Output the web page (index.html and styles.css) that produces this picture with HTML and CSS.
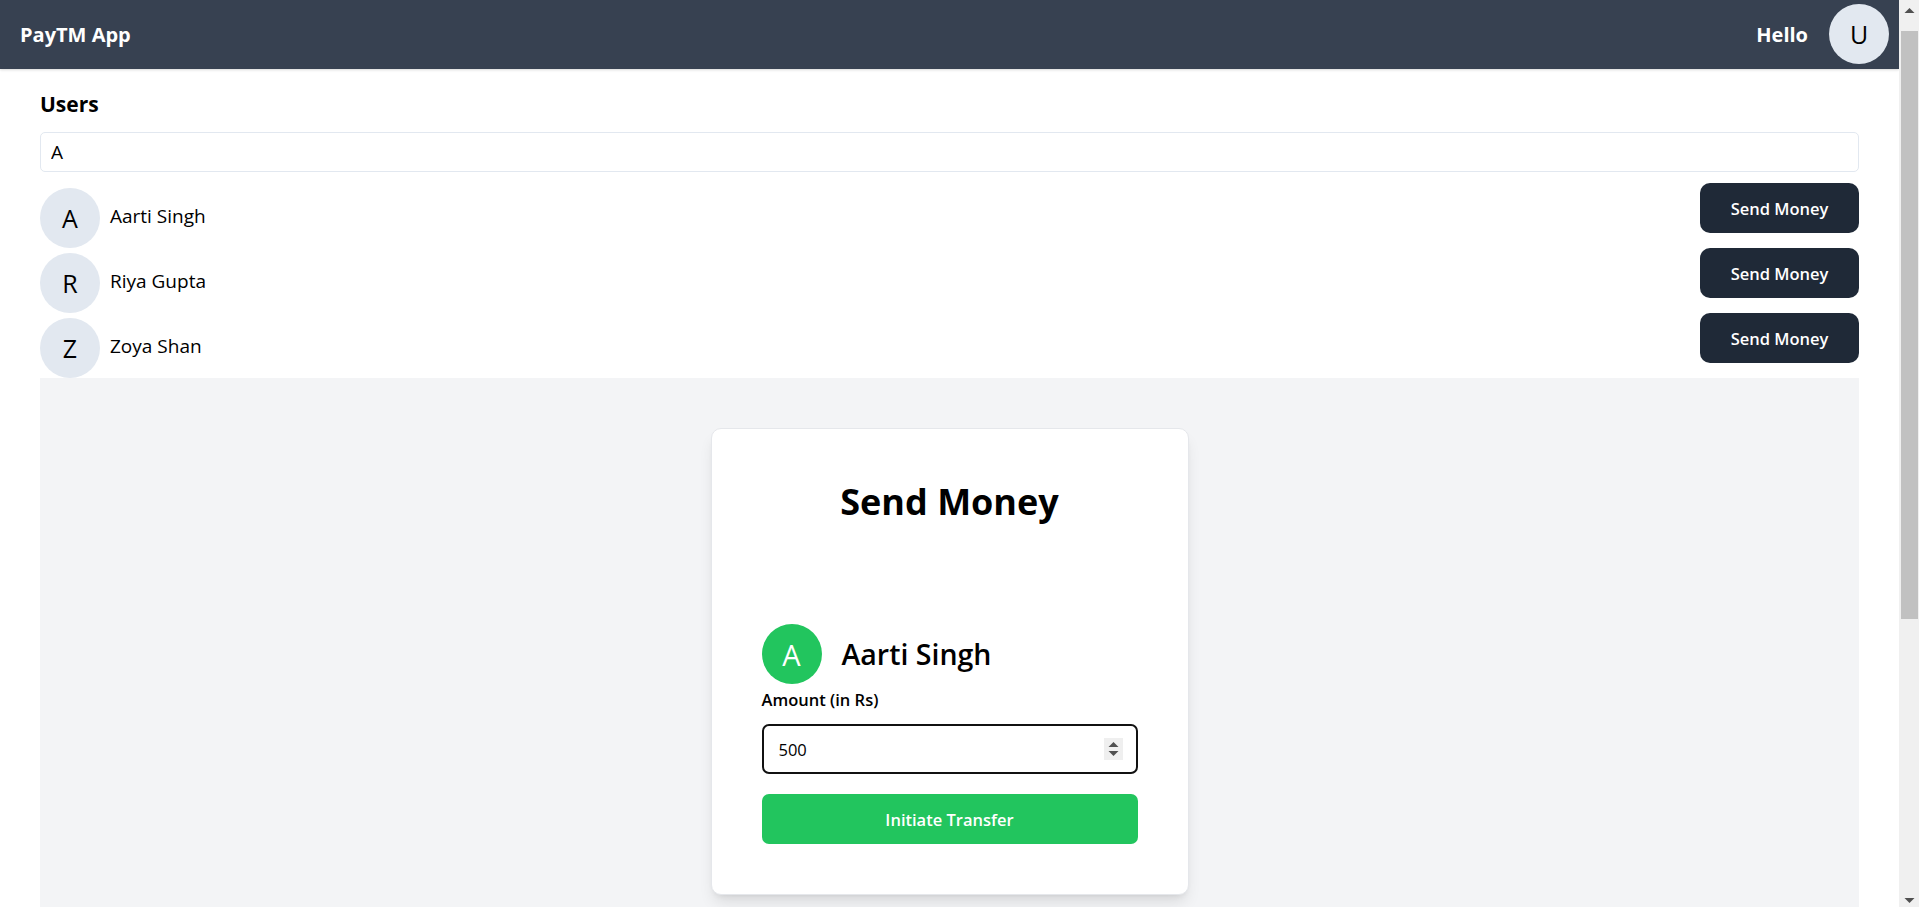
FILE: index.html
```html
<!DOCTYPE html>
<html lang="en">
<head>
<meta charset="utf-8">
<title>PayTM App</title>
<link rel="stylesheet" href="styles.css">
</head>
<body>
<header class="appbar">
  <div class="brand">PayTM App</div>
  <div class="appbar-right">
    <div class="hello">Hello</div>
    <div class="avatar avatar-nav">U</div>
  </div>
</header>
<main class="dashboard">
  <section class="users">
    <div class="users-title">Users</div>
    <div class="search-wrap">
      <input class="search" type="text" value="A" placeholder="Search users...">
    </div>
    <div class="user-list">
      <div class="user-row">
        <div class="user-info">
          <div class="avatar">A</div>
          <div class="user-name">Aarti Singh</div>
        </div>
        <button class="btn-send">Send Money</button>
      </div>
      <div class="user-row">
        <div class="user-info">
          <div class="avatar">R</div>
          <div class="user-name">Riya Gupta</div>
        </div>
        <button class="btn-send">Send Money</button>
      </div>
      <div class="user-row">
        <div class="user-info">
          <div class="avatar">Z</div>
          <div class="user-name">Zoya Shan</div>
        </div>
        <button class="btn-send">Send Money</button>
      </div>
    </div>
  </section>
  <section class="send-panel">
    <div class="card">
      <div class="card-header">
        <h2 class="card-title">Send Money</h2>
      </div>
      <div class="card-body">
        <div class="recipient">
          <div class="avatar avatar-green">A</div>
          <h3 class="recipient-name">Aarti Singh</h3>
        </div>
        <div class="form">
          <div class="field">
            <div class="label-line"><label class="label" for="amount">Amount (in Rs)</label></div>
            <div class="amount-wrap">
              <input class="amount" id="amount" type="text" value="500">
              <span class="spinner">
                <svg width="19" height="22" viewBox="0 0 19 22">
                  <path d="M4.5 9 L9.5 4 L14.5 9 Z" fill="#505050"/>
                  <path d="M4.5 13 L9.5 18 L14.5 13 Z" fill="#505050"/>
                </svg>
              </span>
            </div>
          </div>
          <button class="btn-transfer">Initiate Transfer</button>
        </div>
      </div>
    </div>
  </section>
</main>
<div class="scrollbar" aria-hidden="true">
  <div class="sb-button">
    <svg width="20" height="20" viewBox="0 0 20 20"><path d="M5.5 13 L10.5 8 L15.5 13 Z" fill="#505050"/></svg>
  </div>
  <div class="sb-track">
    <div class="sb-thumb"></div>
  </div>
  <div class="sb-button">
    <svg width="20" height="20" viewBox="0 0 20 20"><path d="M5.5 11 L10.5 16 L15.5 11 Z" fill="#505050"/></svg>
  </div>
</div>
</body>
</html>
```

FILE: styles.css
```css
html, body {
  margin: 0;
  padding: 0;
}

body {
  font-family: "Open Sans", "Noto Sans", sans-serif;
  color: #000;
  background: #fff;
  padding-right: 20px;
}

/* Browser scrollbar (drawn) */
.scrollbar {
  position: fixed;
  top: 0;
  right: 0;
  width: 20px;
  height: 100vh;
  background: #f0f0f0;
  display: flex;
  flex-direction: column;
}
.sb-button {
  height: 20px;
  flex-shrink: 0;
}
.sb-button svg {
  display: block;
}
.sb-track {
  flex: 1;
  padding-top: 11px;
}
.sb-thumb {
  height: 588px;
  margin-left: 2px;
  margin-right: 1px;
  background: #c1c1c1;
}

/* App bar */
.appbar {
  height: 69px;
  background: #374151;
  display: flex;
  justify-content: space-between;
  box-shadow: 0 1px 3px rgba(0, 0, 0, 0.1), 0 1px 2px rgba(0, 0, 0, 0.06);
  position: relative;
}
.brand {
  display: flex;
  align-items: center;
  padding-left: 20px;
  color: #fff;
  font-weight: 700;
  font-size: 20px;
}
.appbar-right {
  display: flex;
}
.hello {
  display: flex;
  align-items: center;
  margin-right: 21px;
  color: #fff;
  font-weight: 700;
  font-size: 20px;
}

.avatar {
  width: 60px;
  height: 60px;
  border-radius: 50%;
  background: #e2e8f0;
  display: flex;
  align-items: center;
  justify-content: center;
  font-size: 25px;
  flex-shrink: 0;
}
.avatar-nav {
  margin-top: 4px;
  margin-right: 10px;
}

/* Dashboard */
.dashboard {
  margin: 0 40px 40px;
}
.users-title {
  margin-top: 18px;
  font-weight: 700;
  font-size: 21px;
  line-height: 35px;
}
.search-wrap {
  margin: 10px 0 11px;
}
.search {
  display: block;
  width: 100%;
  box-sizing: border-box;
  height: 40px;
  padding: 0 10px;
  border: 1px solid #e2e8f0;
  border-radius: 5px;
  font-family: inherit;
  font-size: 19px;
  color: #000;
  outline: none;
}

.user-row {
  display: flex;
  justify-content: space-between;
  align-items: flex-start;
  height: 65px;
}
.user-info {
  display: flex;
  height: 65px;
}
.user-info .avatar {
  margin-top: 5px;
  margin-right: 10px;
}
.user-name {
  display: flex;
  align-items: center;
  font-size: 19px;
}
.btn-send {
  width: 159px;
  height: 50px;
  border: none;
  border-radius: 10px;
  background: #1f2937;
  color: #fff;
  font-family: inherit;
  font-size: 16.5px;
  font-weight: 600;
  cursor: pointer;
}

/* Send money panel */
.send-panel {
  height: 907px;
  background: #f3f4f6;
  display: flex;
  justify-content: center;
  align-items: flex-start;
  padding-top: 50px;
  box-sizing: border-box;
}
.card {
  width: 478px;
  box-sizing: border-box;
  background: #fff;
  border: 1px solid #e5e7eb;
  border-radius: 10px;
  padding: 20px;
  box-shadow: 0 10px 15px -3px rgba(0, 0, 0, 0.1), 0 4px 6px -4px rgba(0, 0, 0, 0.1);
}
.card-header {
  padding: 30px;
}
.card-title {
  margin: 0;
  text-align: center;
  font-size: 36px;
  font-weight: 700;
  line-height: 45px;
}
.card-body {
  margin-top: 40px;
  padding: 30px;
}
.recipient {
  display: flex;
  align-items: center;
  gap: 20px;
}
.avatar-green {
  background: #22c55e;
  color: #fff;
  font-size: 29px;
}
.recipient-name {
  margin: 0;
  font-size: 28.5px;
  font-weight: 600;
  line-height: 40px;
}
.label-line {
  font-size: 20px;
  line-height: 30px;
}
.label {
  font-size: 16.5px;
  font-weight: 600;
  line-height: 1;
}
.amount-wrap {
  position: relative;
  margin-top: 10px;
}
.amount {
  display: block;
  width: 100%;
  box-sizing: border-box;
  height: 50px;
  padding: 0 15px;
  border: 2px solid #111;
  border-radius: 7px;
  font-family: inherit;
  font-size: 16.5px;
  color: #000;
  outline: none;
  background: #fff;
}
.spinner {
  position: absolute;
  right: 15px;
  top: 14px;
  width: 19px;
  height: 22px;
  background: #efefef;
  display: block;
}
.spinner svg {
  display: block;
}
.btn-transfer {
  display: block;
  width: 100%;
  margin-top: 20px;
  height: 50px;
  border: none;
  border-radius: 7px;
  background: #22c55e;
  color: #fff;
  font-family: inherit;
  font-size: 16.5px;
  font-weight: 600;
  cursor: pointer;
}
```
